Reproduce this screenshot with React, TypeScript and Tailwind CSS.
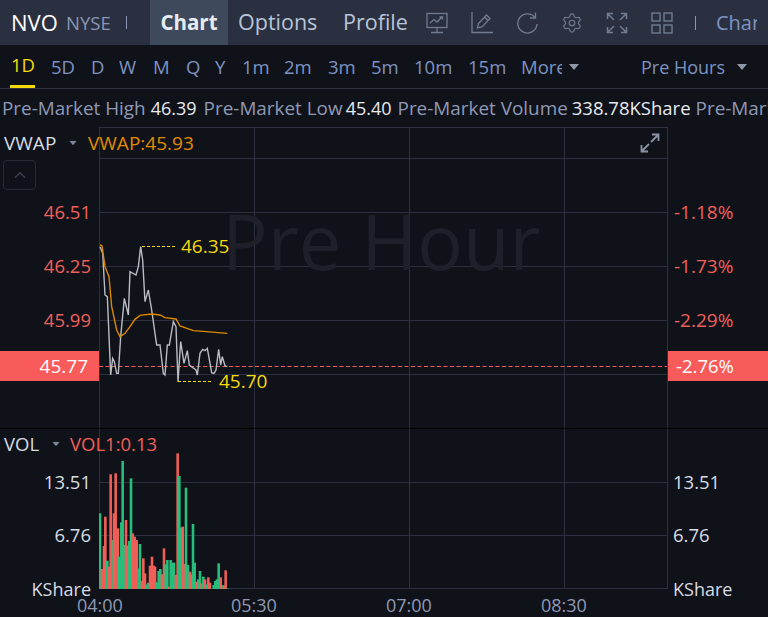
import React from "react";
import { ChevronUp, Settings } from "lucide-react";

const FONT = "font-['Open_Sans','Noto_Sans',sans-serif]";

const PERIODS = [
  { label: "1D", w: "w-[40px]" },
  { label: "5D", w: "w-[40px]" },
  { label: "D", w: "w-[28px]" },
  { label: "W", w: "w-[34px]" },
  { label: "M", w: "w-[33px]" },
  { label: "Q", w: "w-[29px]" },
  { label: "Y", w: "w-[27px]" },
  { label: "1m", w: "w-[42px]" },
  { label: "2m", w: "w-[44px]" },
  { label: "3m", w: "w-[43px]" },
  { label: "5m", w: "w-[43px]" },
  { label: "10m", w: "w-[54px]" },
  { label: "15m", w: "w-[53px]" },
];

// traced from the chart, x/y are offset from (90, 230) at 3x
const PRICE: number[][] = [
  [30, 50], [38, 70], [45, 195], [52, 200], [62, 435], [68, 385], [73, 395], [80, 430], [85, 430], [92, 320],
  [103, 205], [115, 255], [120, 125], [138, 135], [145, 110], [152, 50], [158, 90], [165, 215], [175, 180],
  [185, 240], [200, 345], [210, 345], [220, 430], [225, 435], [232, 345], [238, 345], [250, 275], [258, 290],
  [264, 455], [272, 335], [282, 400], [292, 362], [298, 405], [318, 420], [322, 435], [330, 370], [338, 358],
  [345, 362], [352, 355], [365, 428], [372, 430], [378, 420], [386, 358], [392, 405], [397, 380], [405, 408], [412, 410],
];

const AVERAGE: number[][] = [
  [30, 45], [36, 47], [45, 110], [57, 140], [65, 230], [80, 300], [90, 320], [105, 310], [120, 290], [135, 268],
  [150, 256], [185, 252], [210, 255], [225, 263], [258, 267], [270, 288], [310, 302], [350, 305], [412, 310],
];

// [x at 3x from 90, top at 3x from 445, up?]
const BARS: [number, number, boolean][] = [
  [30, 205, false], [36, 372, true], [42, 303, true], [46, 215, true], [52, 347, false], [58, 365, true], [62, 88, true],
  [68, 285, false], [72, 205, true], [77, 85, true], [84, 250, true], [88, 335, false], [94, 232, false], [98, 48, false],
  [103, 300, false], [108, 225, true], [113, 302, true], [118, 288, false], [123, 100, false], [128, 265, true], [134, 275, true],
  [140, 285, true], [146, 370, false], [150, 297, false], [156, 408, true], [160, 340, true], [165, 385, true], [171, 418, false],
  [175, 413, false], [180, 362, true], [186, 335, true], [191, 362, true], [195, 365, true], [200, 412, false], [206, 378, false],
  [211, 372, false], [216, 388, true], [222, 310, true], [227, 358, false], [232, 345, false], [237, 425, true], [242, 345, false],
  [247, 353, false], [252, 353, false], [258, 390, true], [263, 25, true], [268, 93, false], [273, 248, false], [278, 245, true],
  [283, 357, true], [288, 128, false], [294, 360, false], [300, 380, true], [304, 388, true], [309, 237, false], [314, 353, false],
  [320, 410, true], [325, 403, false], [330, 378, false], [335, 415, true], [340, 395, false], [345, 403, true], [350, 418, false],
  [355, 397, true], [360, 413, true], [371, 420, false], [376, 408, false], [381, 403, false], [386, 355, false], [392, 397, true],
  [397, 420, false], [402, 422, true], [407, 376, true], [412, 430, false],
];

const toPoints = (pts: number[][]) => pts.map(([x, y]) => `${90 + x / 3},${230 + y / 3}`).join(" ");

function ChartIcon() {
  return (
    <svg width="22" height="22" viewBox="0 0 22 22" fill="none" stroke="currentColor" strokeWidth="1.3">
      <rect x="1" y="1.5" width="20" height="14" />
      <path d="M4 11l4-3.5 3 2.5 5-5M13.5 5H16.5v2.5M11 15.5v4.5M5 20.5h12" />
    </svg>
  );
}

function EditIcon() {
  return (
    <svg width="22" height="22" viewBox="0 0 22 22" fill="none" stroke="currentColor" strokeWidth="1.3">
      <path d="M1 0v20.5h21" />
      <path d="M6.5 16l1-4.5 8-8.5 3.5 3.5-8 8.5zM13.5 5l3.5 3.5" />
    </svg>
  );
}

function RefreshIcon() {
  return (
    <svg width="22" height="22" viewBox="0 0 22 22" fill="none" stroke="currentColor" strokeWidth="1.3">
      <path d="M19 5.5A9.6 9.6 0 1 0 21 12" />
      <path d="M19.5 0.5v5.5h-5.5" />
    </svg>
  );
}

function ExpandIcon() {
  return (
    <svg width="22" height="22" viewBox="0 0 22 22" fill="none" stroke="currentColor" strokeWidth="1.5">
      <path d="M1.5 7V1.5H7M1.5 1.5l6.5 6.5M20.5 7V1.5H15M20.5 1.5l-6.5 6.5M1.5 15v5.5H7M1.5 20.5l6.5-6.5M20.5 15v5.5H15M20.5 20.5l-6.5-6.5" />
    </svg>
  );
}

function GridIcon() {
  return (
    <svg width="22" height="22" viewBox="0 0 22 22" fill="none" stroke="currentColor" strokeWidth="1.4">
      <rect x="1" y="1" width="8" height="8" />
      <rect x="13" y="1" width="8" height="8" />
      <rect x="1" y="13" width="8" height="8" />
      <rect x="13" y="13" width="8" height="8" />
    </svg>
  );
}

function Caret({ className }: { className: string }) {
  return (
    <svg width="10" height="6" viewBox="0 0 10 6" className={className}>
      <path d="M0 0h10L5 6z" fill="currentColor" />
    </svg>
  );
}

function AxisRow({ children, h, className }: { children: React.ReactNode; h: string; className: string }) {
  return <div className={`flex items-center shrink-0 whitespace-nowrap ${h} ${className}`}>{children}</div>;
}

export default function App() {
  return (
    <div className={`w-[768px] h-[617px] overflow-hidden bg-[#0f1218] ${FONT}`}>
      {/* Top bar */}
      <div className="flex items-center h-[45px] bg-[#2a3040] text-[#b9c4d8]">
        <span className="ml-[11px] w-[47px] text-[22px] text-white whitespace-nowrap">NVO</span>
        <span className="ml-[8px] w-[45px] text-[18.5px] text-[#8a96b4]">NYSE</span>
        <span className="ml-[15px] w-px h-[13px] bg-[#8a96b4]" />
        <div className="ml-[23px] flex items-center justify-center w-[78px] h-full bg-[#3e4a5c] text-[20.5px] font-bold text-[#e8ecf2]">
          Chart
        </div>
        <span className="ml-[10px] w-[79px] text-[21.5px] whitespace-nowrap">Options</span>
        <span className="ml-[26px] w-[64px] text-[21.5px] whitespace-nowrap">Profile</span>
        <div className="ml-[19px] flex items-center gap-[23px] text-[#717c90]">
          <ChartIcon />
          <EditIcon />
          <RefreshIcon />
          <Settings size={22} strokeWidth={1.3} />
          <ExpandIcon />
          <GridIcon />
        </div>
        <span className="ml-[22px] w-px h-[14px] bg-[#8a96b4]" />
        <span className="ml-[20px] w-[41px] overflow-hidden whitespace-nowrap text-[20px] text-[#7e93c2]">Chart</span>
      </div>

      {/* Period tabs */}
      <div className="flex items-center h-[44px] border-b border-[#2a2f3c] text-[18.5px] text-[#7e93c2]">
        <div className="flex">
          {PERIODS.map((p, i) => (
            <div key={p.label} className={`${p.w} shrink-0 h-[43px] flex flex-col`}>
              <span className={`flex-1 flex items-center pl-[11px] ${i === 0 ? "text-[#f5d90a]" : ""}`}>{p.label}</span>
              {i === 0 && <span className="ml-[10px] w-[25px] h-[3px] bg-[#f5d90a]" />}
            </div>
          ))}
        </div>
        <span className="ml-[11px] w-[41px] overflow-hidden whitespace-nowrap">More</span>
        <Caret className="ml-[7px] text-[#8e97a8]" />
        <span className="ml-[62px] mt-[1px] w-[85px] text-[18px] whitespace-nowrap">Pre Hours</span>
        <Caret className="ml-[11px] text-[#8e97a8]" />
      </div>

      {/* Quote ticker */}
      <div className="flex items-center h-[38px] gap-[5px] pl-[2px] whitespace-nowrap overflow-hidden text-[18.9px] text-[#8f99b5]">
        <span>Pre-Market High</span>
        <span className="text-[18px] text-[#e8eaf0]">46.39</span>
        <span className="ml-[2px]">Pre-Market Low</span>
        <span className="ml-[-2px] text-[18px] text-[#e8eaf0]">45.40</span>
        <span className="ml-[1px]">Pre-Market Volume</span>
        <span className="ml-[-1px] text-[18.5px] text-[#e8eaf0]">338.78KShare</span>
        <span>Pre-Market</span>
      </div>

      {/* Price panel */}
      <div className="relative flex h-[302px] border-b border-black text-[19px]">
        <div className="w-[99px] shrink-0 flex flex-col pt-[58px] text-[18.5px]">
          <AxisRow h="h-[54px]" className="justify-end pr-[8px] text-[#f0605a]">46.51</AxisRow>
          <AxisRow h="h-[54px]" className="justify-end pr-[8px] text-[#f0605a]">46.25</AxisRow>
          <AxisRow h="h-[54px]" className="justify-end pr-[8px] text-[#f0605a]">45.99</AxisRow>
          <AxisRow h="h-[30px] mt-[4px] bg-[#f95b5b] text-[19px]" className="justify-end pr-[11px] text-white">45.77</AxisRow>
        </div>
        <svg width="569" height="301" viewBox="99 127 569 301" className="shrink-0">
          <g stroke="#2a303d" strokeWidth="1" fill="none">
            <path d="M99 127.5H667M99 158.5H667M99 212.5H667M99 266.5H667M99 320.5H667M99 374.5H667" />
            <path d="M99.5 127V428M254.5 127V428M409.5 127V428M564.5 127V428M667.5 127V428" />
          </g>
          <path d="M99 366.5H667" stroke="#f95b5b" strokeWidth="1" strokeDasharray="4 2.5" />
          <polyline points={toPoints(PRICE)} fill="none" stroke="#b9bcc2" strokeWidth="1.4" />
          <polyline points={toPoints(AVERAGE)} fill="none" stroke="#dd8800" strokeWidth="1.4" />
          <path d="M142 246.5H175M178 381.5H213" stroke="#f5d90a" strokeWidth="1" strokeDasharray="3 2" />
        </svg>
        <div className="w-[100px] shrink-0 flex flex-col pt-[58px]">
          <AxisRow h="h-[54px]" className="pl-[6px] text-[#f0605a]">-1.18%</AxisRow>
          <AxisRow h="h-[54px]" className="pl-[6px] text-[#f0605a]">-1.73%</AxisRow>
          <AxisRow h="h-[54px]" className="pl-[6px] text-[#f0605a]">-2.29%</AxisRow>
          <AxisRow h="h-[30px] mt-[4px] bg-[#f95b5b] text-[18.5px]" className="pl-[8px] text-white">-2.76%</AxisRow>
        </div>

        {/* Overlays on the chart */}
        <div className="absolute left-[222px] top-[76px] text-[76px] leading-none text-[#1d2029] whitespace-nowrap">Pre Hour</div>
        <span className="absolute left-[181px] top-[105px] text-[#f5d90a]">46.35</span>
        <span className="absolute left-[219px] top-[240px] text-[#f5d90a]">45.70</span>
        <div className="absolute left-[4px] top-0 h-[32px] flex items-center">
          <span className="w-[54px] text-[#d8dce4]">VWAP</span>
          <Caret className="ml-[10px] text-[#7d8799] scale-75" />
          <span className="ml-[10px] text-[#e08a00]">VWAP:45.93</span>
        </div>
        <div className="absolute left-[3px] top-[33px] w-[33px] h-[30px] flex items-center justify-center rounded-[4px] border border-[#262b36] text-[#3d4452]">
          <ChevronUp size={18} />
        </div>
        <div className="absolute left-[640px] top-[6px] text-[#8a93a5]">
          <svg width="20" height="20" viewBox="0 0 20 20" fill="none" stroke="currentColor" strokeWidth="1.8">
            <path d="M12 1.5h6.5V8M18.5 1.5L11 9M8 18.5H1.5V12M1.5 18.5L9 11" />
          </svg>
        </div>
      </div>

      {/* Volume panel */}
      <div className="relative flex h-[160px] text-[18.5px]">
        <div className="w-[99px] shrink-0 flex flex-col items-end pt-[26px] pr-[8px]">
          <AxisRow h="h-[53px]" className="text-[#d8dce4]">13.51</AxisRow>
          <AxisRow h="h-[54px]" className="text-[#d8dce4]">6.76</AxisRow>
          <AxisRow h="h-[54px] text-[18px]" className="text-[#d8dce4]">KShare</AxisRow>
        </div>
        <svg width="569" height="160" viewBox="99 429 569 160" className="shrink-0">
          <g stroke="#2a303d" strokeWidth="1" fill="none">
            <path d="M99 482.5H667M99 535.5H667M99 588.5H667" />
            <path d="M99.5 429V589M254.5 429V589M409.5 429V589M564.5 429V589M667.5 429V589" />
          </g>
          {BARS.map(([x, top, up], i) => (
            <rect
              key={i}
              x={90 + x / 3 - 1.3}
              y={445 + top / 3}
              width="2.6"
              height={144 - top / 3}
              fill={up ? "#ef5f58" : "#27bd7c"}
            />
          ))}
        </svg>
        <div className="w-[100px] shrink-0 flex flex-col pt-[26px] pl-[5px]">
          <AxisRow h="h-[53px]" className="text-[#d8dce4]">13.51</AxisRow>
          <AxisRow h="h-[54px]" className="text-[#d8dce4]">6.76</AxisRow>
          <AxisRow h="h-[54px] text-[18px]" className="text-[#d8dce4]">KShare</AxisRow>
        </div>
        <div className="absolute left-[4px] top-0 h-[29px] flex items-center">
          <span className="w-[37px] text-[#d8dce4]">VOL</span>
          <Caret className="ml-[10px] text-[#7d8799] scale-75" />
          <span className="ml-[9px] text-[#f0605a]">VOL1:0.13</span>
        </div>
      </div>

      {/* Time axis */}
      <div className="flex h-[28px] pt-[4px] pl-[77px] items-center text-[18px] text-[#8f99b5]">
        <span className="w-[154px]">04:00</span>
        <span className="w-[155px]">05:30</span>
        <span className="w-[155px]">07:00</span>
        <span>08:30</span>
      </div>
    </div>
  );
}
